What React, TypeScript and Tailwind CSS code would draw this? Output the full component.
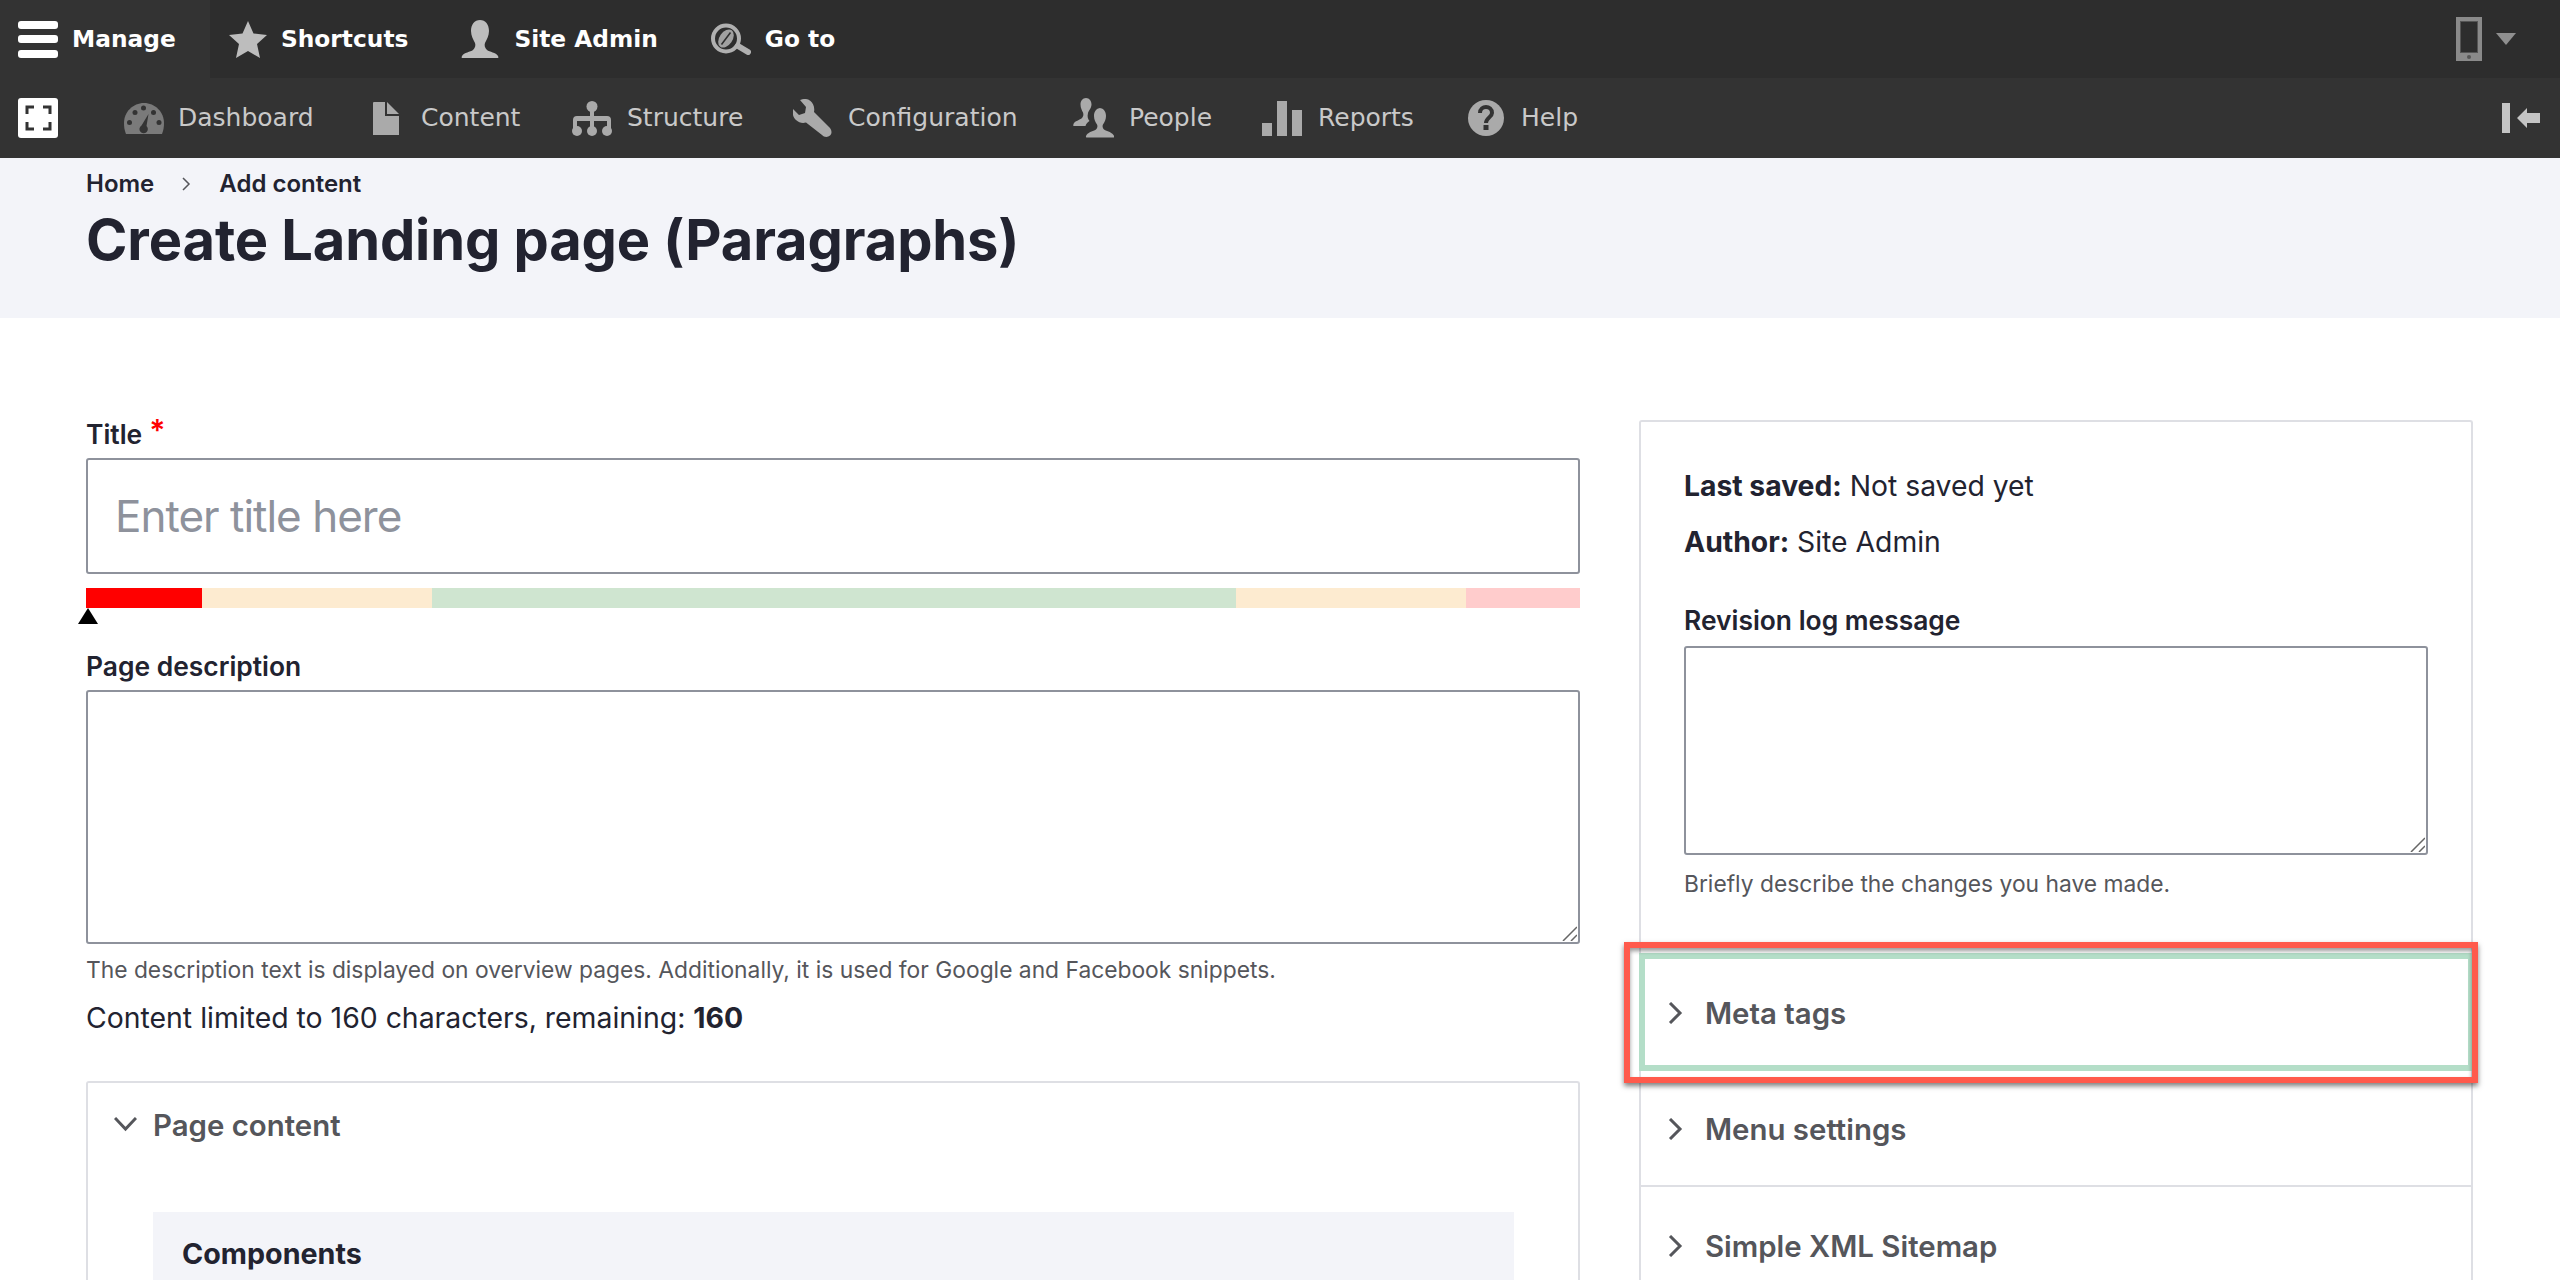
const toolbarFont = "font-['DejaVu_Sans',sans-serif]";

function NavIcon({ name }: { name: string }) {
  const fill = "#aaaaaa";
  if (name === "dashboard") {
    return (
      <svg className="h-[31px] w-[40px]" viewBox="0 0 40 31">
        <path fill="#7a7a7a" d="M20 0C9 0 0 9 0 20c0 4 .5 7.500 2 11h36c1.500-3.500 2-7 2-11C40 9 31 0 20 0z" />
        <circle cx="19.500" cy="5" r="2.500" fill="#333" />
        <circle cx="11" cy="9.500" r="2.500" fill="#333" />
        <circle cx="29.500" cy="9.500" r="2.500" fill="#333" />
        <circle cx="5.500" cy="19.500" r="2.500" fill="#333" />
        <circle cx="35" cy="19.500" r="2.500" fill="#333" />
        <path fill="#333" d="M24.500 11l-2 12a4.200 4.200 0 1 1-5-.5z" />
      </svg>
    );
  }
  if (name === "content") {
    return (
      <svg className="h-[33px] w-[26px]" viewBox="0 0 26 33" fill={fill}>
        <path d="M0 1a1 1 0 0 1 1-1h11v14h14v19H0z" />
        <path d="M14 0l12 12H14z" />
      </svg>
    );
  }
  if (name === "structure") {
    return (
      <svg className="h-[35px] w-[40px]" viewBox="0 0 40 35" fill={fill}>
        <circle cx="20" cy="5.500" r="5.500" />
        <path d="M18 8h4v7h13a4 4 0 0 1 4 4v9h-4v-8h-13v8h-4v-8H5v8H1v-9a4 4 0 0 1 4-4h13z" />
        <circle cx="5" cy="30" r="5" />
        <circle cx="20" cy="30" r="5" />
        <circle cx="35" cy="30" r="5" />
      </svg>
    );
  }
  if (name === "configuration") {
    return (
      <svg className="h-[38px] w-[39px]" viewBox="0 0 39 38" fill={fill}>
        <path d="M13 0c-3 0-5 .5-6 1l6 7-1 6-6 2-6-6c-1 4 0 8 3 11 3 2.500 6 3.500 10 2.500L29 36c2 2.500 6 2.500 8 .5s2-5 0-7.500L21 13c1-5-1-9-3.500-11C16 .8 14.500 0 13 0z" />
      </svg>
    );
  }
  if (name === "people") {
    return (
      <svg className="h-[40px] w-[41px]" viewBox="0 0 41 40" fill={fill}>
        <path d="M13 0c-3.500 0-5.500 3-5.500 6.500 0 3.500 1.500 6 2.500 8 .8 2 .3 4-1 5.500C7 22 1.500 23 .5 26c-.3 1-.3 2 0 2h12c.5-2 2-4 4-5-1.500-2-2.500-4-1.500-8 .5-2 3.500-5 3.500-8.500C18.500 3 16.500 0 13 0z" />
        <path d="M28 10c-4.500 0-7 3.500-7 8 0 3.500 1.500 6.500 3 8.500.8 1.500.4 3.500-1 5-1.700 1.500-7 2-9.500 5.500-.8 1.200-.8 2.500 0 2.500h27c.8 0 .8-1.300 0-2.500-2.500-3.500-7.800-4-9.500-5.500-1.400-1.500-1.800-3.500-1-5 1.500-2 3-5 3-8.500 0-4.500-2.500-8-7-8z" />
      </svg>
    );
  }
  if (name === "reports") {
    return (
      <svg className="h-[35px] w-[40px]" viewBox="0 0 40 35" fill={fill}>
        <rect x="0" y="22" width="10" height="13" />
        <rect x="15" y="0" width="10" height="35" />
        <rect x="30" y="9" width="10" height="26" />
      </svg>
    );
  }
  return (
    <svg className="h-[36px] w-[36px]" viewBox="0 0 36 36">
      <circle cx="18" cy="18" r="18" fill={fill} />
      <path d="M12 13c0-4 3-6 6-6s6 2 6 6c0 4-6 5-6 10" fill="none" stroke="#333" strokeWidth="4" />
      <rect x="15.500" y="25" width="5" height="5" fill="#333" />
    </svg>
  );
}

// gap and width are per item: the reference spacing is not even
const navItems = [
  { icon: "dashboard", label: "Dashboard", gap: "gap-[14px]", w: "w-[195px]" },
  { icon: "content", label: "Content", gap: "gap-[22px]", w: "w-[151px]" },
  { icon: "structure", label: "Structure", gap: "gap-[15px]", w: "w-[166px]" },
  { icon: "configuration", label: "Configuration", gap: "gap-[16px]", w: "w-[225px]" },
  { icon: "people", label: "People", gap: "gap-[15px]", w: "w-[133px]" },
  { icon: "reports", label: "Reports", gap: "gap-[16px]", w: "w-[150px]" },
  { icon: "help", label: "Help", gap: "gap-[17px]", w: "w-[56px]" },
];

function Toolbar() {
  return (
    <div className={toolbarFont}>
      <div className="flex h-[78px] items-center bg-[#2d2d2d] pr-[44px] text-[23.300px] font-bold text-white">
        <div className="flex h-full w-[210px] items-center gap-[14px] bg-[#333333] pl-[18px]">
          <div className="flex h-[37px] w-[40px] flex-col justify-between">
            <span className="h-[8px] rounded-[3px] bg-white" />
            <span className="h-[8px] rounded-[3px] bg-white" />
            <span className="h-[8px] rounded-[3px] bg-white" />
          </div>
          Manage
        </div>
        <div className="ml-[19px] flex items-center gap-[14px]">
          <svg className="h-[37px] w-[38px]" viewBox="0 0 38 37" fill="#bdbdbd">
            <path d="M19 0l5.500 12.500L38 14l-10 9 3 14-12-7-12 7 3-14L0 14l13.500-1.500z" />
          </svg>
          <span>Shortcuts</span>
        </div>
        <div className="ml-[53px] flex items-center gap-[15px]">
          <svg className="h-[38px] w-[38px]" viewBox="0 0 38 38" fill="#bdbdbd">
            <path d="M19 0c-5.500 0-9 4.500-9 11 0 5 2.500 9 4 12 .8 2 .3 5-2 7-2.500 2-9 2.500-11 6-.5 1-.5 2 0 2h36c.5 0 .5-1 0-2-2-3.500-8.500-4-11-6-2.300-2-2.800-5-2-7 1.500-3 4-7 4-12 0-6.500-3.500-11-9-11z" />
          </svg>
          <span>Site Admin</span>
        </div>
        <div className="ml-[53px] flex items-center gap-[14px]">
          <svg className="h-[32px] w-[40px]" viewBox="0 0 40 32">
            <circle cx="15" cy="15.500" r="13" fill="none" stroke="#b0b0b0" strokeWidth="4" />
            <ellipse cx="15" cy="15.500" rx="6.500" ry="10" transform="rotate(35 15 15.500)" fill="#a0a0a0" />
            <path d="M10.500 21.500l9-12" stroke="#2d2d2d" strokeWidth="1.500" />
            <path d="M27 23l10 6" stroke="#b0b0b0" strokeWidth="6" strokeLinecap="round" />
          </svg>
          <span>Go to</span>
        </div>
        <div className="ml-auto flex items-center gap-[14px]">
          <div className="flex h-[44px] w-[26px] flex-col items-center bg-[#8a8a8a] pt-[4px]">
            <span className="h-[32px] w-[18px] border border-[#555] bg-[#2d2d2d]" />
            <span className="mt-[2px] h-[4px] w-[4px] rounded-full bg-[#555]" />
          </div>
          <svg className="h-[12px] w-[20px]" viewBox="0 0 20 12" fill="#8f8f8f">
            <path d="M0 0h20L10 12z" />
          </svg>
        </div>
      </div>
      <div className="flex h-[80px] items-center bg-[#333333] pl-[18px] pr-[20px] text-[25px] text-[#c9c9c9]">
        <div className="flex h-[40px] w-[40px] items-center justify-center rounded-[3px] bg-white">
          <svg className="h-[26px] w-[27px]" viewBox="0 0 27 26" fill="none" stroke="#333" strokeWidth="3">
            <path d="M2 9V2h7M18 2h7v7M2 17v7h7M18 24h7v-7" />
          </svg>
        </div>
        <div className="ml-[66px] flex items-center">
          {navItems.map((item) => (
            <div key={item.label} className={`flex items-center ${item.gap}`}>
              <NavIcon name={item.icon} />
              <span className={`${item.w} whitespace-nowrap`}>{item.label}</span>
            </div>
          ))}
        </div>
        <div className="ml-auto flex items-center gap-[7px]">
          <span className="h-[30px] w-[8px] bg-[#c4c4c4]" />
          <svg className="h-[20px] w-[23px]" viewBox="0 0 23 20" fill="#c4c4c4">
            <path d="M0 10L10 0v5h13v10H10v5z" />
          </svg>
        </div>
      </div>
    </div>
  );
}

function ResizeGrip() {
  return (
    <svg className="pointer-events-none absolute bottom-[3px] right-[3px] h-[15px] w-[15px]" viewBox="0 0 15 15" stroke="#666" strokeWidth="1.500">
      <path d="M1 15L15 1M9 15l6-6" />
    </svg>
  );
}

function Chevron() {
  return (
    <svg className="h-[22px] w-[15px] shrink-0" viewBox="0 0 15 22" fill="none" stroke="#55565b" strokeWidth="3">
      <path d="M2 1l10 10L2 21" />
    </svg>
  );
}

function Accordion({ label, className }: { label: string; className: string }) {
  return (
    <div className={`relative flex items-center gap-[22px] pt-[2px] text-[29.400px] font-semibold text-[#55565b] ${className}`}>
      <Chevron />
      <span className="mt-[2px]">{label}</span>
      {label === "Meta tags" && (
        <div className="absolute bottom-[-18px] left-[-21px] right-[-10px] top-[-17px] border-[6px] border-[#ff5a4c] shadow-[0_3px_5px_rgba(0,0,0,0.5),inset_0_3px_4px_rgba(0,0,0,0.4)]" />
      )}
    </div>
  );
}

export default function App() {
  return (
    <div className="h-[1280px] overflow-hidden bg-white font-['Inter',sans-serif] text-[#222330]">
      <Toolbar />
      <header className="h-[160px] bg-[#f3f4f9] px-[86px] pt-[11px]">
        <div className="flex h-[30px] items-center text-[24px] font-semibold">
          <span>Home</span>
          <svg className="mx-[28px] h-[14px] w-[9px]" viewBox="0 0 9 14" fill="none" stroke="#55565b" strokeWidth="1.500">
            <path d="M1 1l6 6-6 6" />
          </svg>
          <span>Add content</span>
        </div>
        <h1 className="mt-[7px] text-[56px] font-bold leading-[68px] tracking-[-0.1px]">Create Landing page (Paragraphs)</h1>
      </header>
      <main className="flex gap-[59px] px-[86px] pt-[102px]">
        <div className="w-[1494px] shrink-0">
          <label className="flex h-[30px] items-center text-[26.400px] font-semibold">
            Title
            <span className="mb-[10px] ml-[7px] text-[30px] leading-none text-[#ff0000]">*</span>
          </label>
          <input
            className="mt-[8px] h-[116px] w-full rounded-[3px] border-2 border-[#8e929c] px-[27px] text-[44px] tracking-[-1px] placeholder:text-[#8e929c]"
            placeholder="Enter title here"
            readOnly
          />
          <div className="mt-[14px] flex h-[20px]">
            <div className="w-[116px] bg-[#ff0000]" />
            <div className="w-[230px] bg-[#fdebd0]" />
            <div className="w-[804px] bg-[#cfe5d0]" />
            <div className="w-[230px] bg-[#fdebd0]" />
            <div className="w-[114px] bg-[#ffcccc]" />
          </div>
          <svg className="-ml-[8px] block h-[16px] w-[20px]" viewBox="0 0 20 16" fill="#000">
            <path d="M10 0l10 16H0z" />
          </svg>
          <label className="mt-[28px] flex h-[30px] items-center text-[26.400px] font-semibold">Page description</label>
          <div className="relative mt-[8px] h-[254px]">
            <textarea className="block h-full w-full resize-none rounded-[3px] border-2 border-[#8e929c]" readOnly />
            <ResizeGrip />
          </div>
          <p className="mt-[13px] h-[26px] whitespace-nowrap text-[22.800px] leading-[26px] text-[#55565b]">
            The description text is displayed on overview pages. Additionally, it is used for Google and Facebook snippets.
          </p>
          <p className="mt-[17px] h-[36px] text-[28.400px] leading-[36px]">
            Content limited to 160 characters, remaining: <strong className="font-bold">160</strong>
          </p>
          <section className="mt-[45px] rounded-t-[3px] border-2 border-b-0 border-[#dedfe4] pl-[65px] pr-[64px]">
            <div className="relative flex h-[85px] items-center pt-[2px] text-[29.400px] font-semibold text-[#55565b]">
              <svg className="absolute left-[-39px] top-[34px] h-[15px] w-[23px]" viewBox="0 0 23 15" fill="none" stroke="#55565b" strokeWidth="3">
                <path d="M1 1l10.500 11L22 1" />
              </svg>
              Page content
            </div>
            <div className="mt-[44px] h-[200px] bg-[#f3f4f9] px-[29px] pt-[25px]">
              <h2 className="text-[28.700px] font-bold leading-[34px]">Components</h2>
            </div>
          </section>
        </div>
        <aside className="w-[834px] shrink-0 rounded-t-[3px] border-2 border-b-0 border-[#dedfe4] pt-[46px]">
          <div className="px-[43px]">
            <p className="h-[36px] text-[28.300px] leading-[36px]">
              <strong className="font-bold">Last saved:</strong> Not saved yet
            </p>
            <p className="mt-[20px] h-[36px] text-[28.300px] leading-[36px]">
              <strong className="font-bold">Author:</strong> Site Admin
            </p>
            <label className="mt-[46px] flex h-[30px] items-center text-[26.400px] font-semibold">Revision log message</label>
            <div className="relative mt-[10px] h-[209px]">
              <textarea className="block h-full w-full resize-none rounded-[3px] border-2 border-[#8e929c]" readOnly />
              <ResizeGrip />
            </div>
            <p className="mt-[16px] h-[26px] text-[22.800px] leading-[26px] text-[#55565b]">Briefly describe the changes you have made.</p>
          </div>
          <div className="mt-[56px]">
            <Accordion label="Meta tags" className="-ml-[2px] -mr-[3px] h-[118px] border-[6px] border-[#b4dec8] pl-[23px]" />
            <Accordion label="Menu settings" className="h-[116px] border-b-2 border-[#dedfe4] pl-[27px]" />
            <Accordion label="Simple XML Sitemap" className="h-[116px] pl-[27px]" />
          </div>
        </aside>
      </main>
    </div>
  );
}
